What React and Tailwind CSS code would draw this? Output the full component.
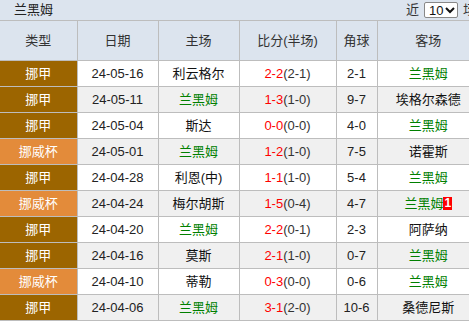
import React from "react";

const rows = [
  { type: "挪甲", date: "24-05-16", home: "利云格尔", score: "2-2", half: "(2-1)", corner: "2-1", away: "兰黑姆" },
  { type: "挪甲", date: "24-05-11", home: "兰黑姆", score: "1-3", half: "(1-0)", corner: "9-7", away: "埃格尔森德" },
  { type: "挪甲", date: "24-05-04", home: "斯达", score: "0-0", half: "(0-0)", corner: "4-0", away: "兰黑姆" },
  { type: "挪威杯", date: "24-05-01", home: "兰黑姆", score: "1-2", half: "(1-0)", corner: "7-5", away: "诺霍斯" },
  { type: "挪甲", date: "24-04-28", home: "利恩(中)", score: "1-1", half: "(1-0)", corner: "5-4", away: "兰黑姆" },
  { type: "挪威杯", date: "24-04-24", home: "梅尔胡斯", score: "1-5", half: "(0-4)", corner: "4-7", away: "兰黑姆", badge: "1" },
  { type: "挪甲", date: "24-04-20", home: "兰黑姆", score: "2-2", half: "(0-1)", corner: "2-3", away: "阿萨纳" },
  { type: "挪甲", date: "24-04-16", home: "莫斯", score: "2-1", half: "(1-0)", corner: "0-7", away: "兰黑姆" },
  { type: "挪威杯", date: "24-04-10", home: "蒂勒", score: "0-3", half: "(0-0)", corner: "0-6", away: "兰黑姆" },
  { type: "挪甲", date: "24-04-06", home: "兰黑姆", score: "3-1", half: "(2-0)", corner: "10-6", away: "桑德尼斯" },
];

const TEAM = "兰黑姆";

function Team({ name }) {
  return <span className={name === TEAM ? "text-[#008000]" : "text-[#111]"}>{name}</span>;
}

export default function App() {
  return (
    <div
      className="w-[469px] h-[321px] overflow-hidden bg-white text-[13px] text-[#222]"
      style={{ fontFamily: '"Liberation Sans", Arial, "Noto Sans CJK SC", sans-serif' }}
    >
      <div className="w-[480px]">
        {/* title bar */}
        <div className="h-[20px] bg-[#dce4ee] flex items-center justify-between pl-[14px] pr-[4px]">
          <span className="text-[#222]">兰黑姆</span>
          <div className="flex items-center gap-[5px] text-[#333]">
            <span>近</span>
            <div className="h-[16px] w-[34px] bg-white border border-[#888] rounded-[2px] flex items-center justify-between pl-[4px] pr-[2px] text-[#111]">
              <span className="leading-none">10</span>
              <svg width="10" height="8" viewBox="0 0 10 8">
                <path d="M1 2 L5 6 L9 2" fill="none" stroke="#111" strokeWidth="2" />
              </svg>
            </div>
            <span>场</span>
          </div>
        </div>

        <table className="table-fixed border-collapse w-[480px]">
          <colgroup>
            <col className="w-[77px]" />
            <col className="w-[81px]" />
            <col className="w-[81px]" />
            <col className="w-[97px]" />
            <col className="w-[41px]" />
            <col />
          </colgroup>
          <thead>
            <tr className="h-[40px] bg-[#dce4ee] text-[#333]">
              {["类型", "日期", "主场", "比分(半场)", "角球", "客场"].map((h) => (
                <th key={h} className="font-normal border border-[#bdbdbd] border-l-0 p-0 text-center">
                  {h}
                </th>
              ))}
            </tr>
          </thead>
          <tbody>
            {rows.map((r, i) => (
              <tr key={i} className={`h-[26px] ${i % 2 === 1 ? "bg-[#f0f0f0]" : "bg-white"}`}>
                <td
                  className={`border border-[#bdbdbd] border-l-0 border-t-0 p-0 text-center text-white ${
                    r.type === "挪甲" ? "bg-[#9c6500]" : "bg-[#e38b3a]"
                  }`}
                >
                  {r.type}
                </td>
                <td className="border border-[#bdbdbd] border-t-0 p-0 text-center text-[#222]">{r.date}</td>
                <td className="border border-[#bdbdbd] border-t-0 p-0 text-center">
                  <Team name={r.home} />
                </td>
                <td className="border border-[#bdbdbd] border-t-0 p-0 text-center text-[#333]">
                  <span className="text-[#ff0000]">{r.score}</span>
                  {r.half}
                </td>
                <td className="border border-[#bdbdbd] border-t-0 p-0 text-center text-[#222]">{r.corner}</td>
                <td className="border border-[#bdbdbd] border-t-0 p-0 text-center">
                  <Team name={r.away} />
                  {r.badge && (
                    <span className="inline-block bg-[#ff0000] text-white font-bold text-[12px] leading-[13px] px-[1px] align-[1px]">
                      {r.badge}
                    </span>
                  )}
                </td>
              </tr>
            ))}
          </tbody>
        </table>
      </div>
    </div>
  );
}
